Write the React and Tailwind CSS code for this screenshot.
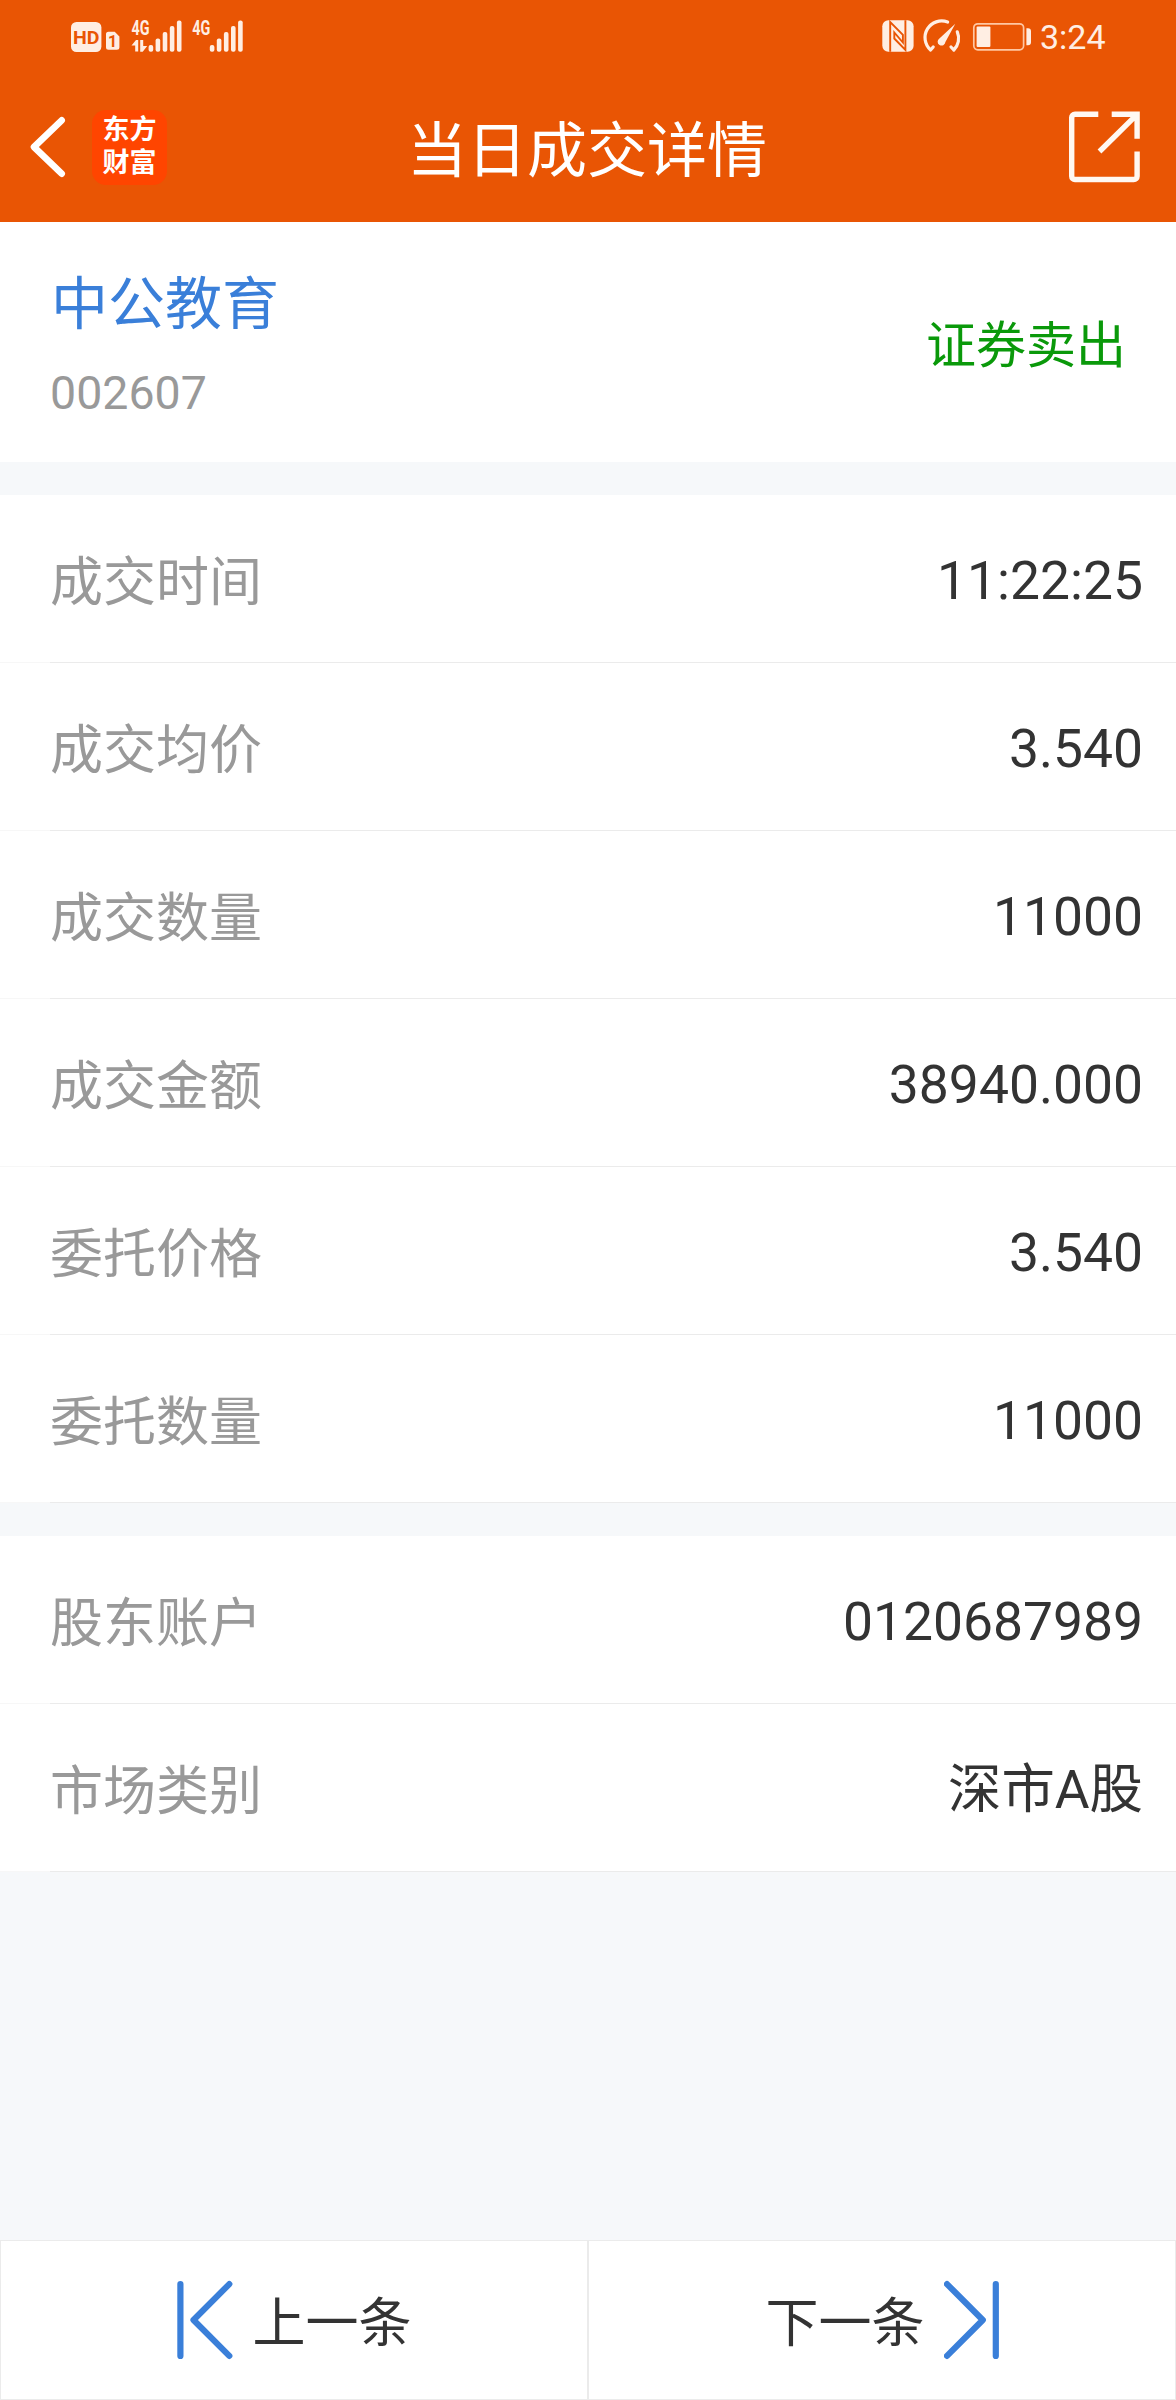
import React from 'react';

const dealRows = [
  { label: '成交时间', value: '11:22:25' },
  { label: '成交均价', value: '3.540' },
  { label: '成交数量', value: '11000' },
  { label: '成交金额', value: '38940.000' },
  { label: '委托价格', value: '3.540' },
  { label: '委托数量', value: '11000' },
];

const accountRows = [
  { label: '股东账户', value: '0120687989' },
  { label: '市场类别', value: '深市A股' },
];

const SignalBars = ({ x }) => (
  <g>
    <rect x={x} y="45" width="4.6" height="6.8" rx="2" />
    <rect x={x + 7} y="38.6" width="4.6" height="13.2" rx="2" />
    <rect x={x + 14.1} y="32" width="4.6" height="19.8" rx="2" />
    <rect x={x + 21.2} y="26" width="4.6" height="25.8" rx="2" />
    <rect x={x + 28.3} y="20.4" width="4.6" height="31.4" rx="2" />
  </g>
);

const StatusLeft = () => (
  <svg width="180" height="72" viewBox="70 0 180 72" fill="#ffeee3" fontFamily="Roboto, sans-serif">
    <rect x="71" y="22" width="30.4" height="30" rx="5.5" />
    <text x="73" y="44" fontSize="19" fontWeight="700" fill="#e95504" textLength="26.5" lengthAdjust="spacingAndGlyphs">HD</text>
    <path d="M108.5 31.7h6.2l4.7 4.8v10.8a2.5 2.5 0 0 1-2.5 2.5h-8.4a2.5 2.5 0 0 1-2.5-2.5v-13a2.5 2.5 0 0 1 2.5-2.6z" />
    <text x="108" y="47" fontSize="16" fontWeight="700" fill="#e95504">1</text>
    <text x="131.5" y="34.6" fontSize="19.5" fontWeight="700" textLength="18" lengthAdjust="spacingAndGlyphs">4G</text>
    <path d="M131.5 45.5l4.5-5.5h2.2v11.5h-3v-6zM140.2 40h3v6l4 0-4.5 5.7h-2.5z" />
    <SignalBars x={148.6} />
    <text x="192.3" y="34.6" fontSize="19.5" fontWeight="700" textLength="18" lengthAdjust="spacingAndGlyphs">4G</text>
    <SignalBars x={209.8} />
  </svg>
);

const StatusRight = () => (
  <svg width="153" height="72" viewBox="880 0 153 72" fill="#ffeee3">
    {/* nfc */}
    <rect x="882.3" y="20.3" width="31.3" height="31.4" rx="6" />
    <g fill="none" stroke="#e95504" strokeWidth="1.9">
      <path d="M890.2 51.7V22L902.9 34.8V42.5L894.3 32.5V38.5L905.4 50V20.3" />
    </g>
    {/* speed gauge */}
    <g fill="none" stroke="#ffeee3" strokeLinecap="round" strokeLinejoin="round" strokeWidth="3.2">
      <path d="M947.6 22.1A16.6 16.6 0 0 0 930.6 50L933.2 47" />
      <path d="M957.3 31.8A16.6 16.6 0 0 1 953.8 50L951 47" />
    </g>
    <path d="M955.3 23.8L945.4 42A3.9 3.9 0 1 1 939.4 38.4z" />
    {/* battery */}
    <rect x="973.8" y="23.8" width="49.8" height="26" rx="4" fill="none" stroke="#ffc7a3" strokeWidth="1.7" />
    <rect x="976.6" y="26.4" width="13.8" height="20.6" rx="1" />
    <path d="M1026.4 28.2h1.6a3 3 0 0 1 3 3v11a3 3 0 0 1-3 3h-1.6z" />
  </svg>
);

const BackIcon = () => (
  <svg width="38" height="64" viewBox="29 115 38 64" fill="none" stroke="#fff" strokeWidth="6.6" strokeLinecap="round" strokeLinejoin="round">
    <path d="M61.7 120.3L34 147L61.7 173.7" />
  </svg>
);

const ShareIcon = () => (
  <svg width="72" height="72" viewBox="1069 110.5 72 72" fill="none" stroke="#fff8f2" strokeWidth="5.4">
    <path d="M1098.3 113.8H1075a3.3 3.3 0 0 0-3.3 3.3V175.7a3.3 3.3 0 0 0 3.3 3.3H1133.8a3.3 3.3 0 0 0 3.3-3.3V151" />
    <path d="M1111.7 113.8H1137.1V138.3M1137.1 113.8L1099.5 151" />
  </svg>
);

const PrevIcon = () => (
  <svg width="56" height="80" viewBox="0 0 56 80" fill="none" stroke="#3a7fd9" strokeWidth="6.2" strokeLinecap="round" strokeLinejoin="round">
    <path d="M3.4 4.1V75.9M52.3 4.1L16.5 40L52.3 75.9" />
  </svg>
);

const NextIcon = () => (
  <svg width="56" height="80" viewBox="0 0 56 80" fill="none" stroke="#3a7fd9" strokeWidth="6.2" strokeLinecap="round" strokeLinejoin="round">
    <path d="M51.8 4.1V75.9M3 4.1L38.8 40L3 75.9" />
  </svg>
);

const DetailRow = ({ label, value }) => (
  <div className="flex h-[168px] flex-col bg-white">
    <div className="flex flex-1 items-center justify-between pt-[5px] pr-[33px] pl-[50px] leading-[80px]">
      <span className="pt-[4px] text-[53px] text-[#999999]">{label}</span>
      <span className="text-[53.4px] text-[#333333]">{value}</span>
    </div>
    <div className="flex h-px">
      <div className="w-[50px] bg-[#f7f7f7]" />
      <div className="flex-1 bg-[#ebebeb]" />
    </div>
  </div>
);

const App = () => {
  return (
    <div className="flex h-[2400px] w-[1176px] flex-col overflow-hidden bg-[#f6f8fa] font-['Roboto','Noto_Sans_CJK_SC',sans-serif]">
      <header className="h-[222px] bg-[#e95504] text-white">
        <div className="flex h-[72px] justify-between pr-[71px] pl-[70px]">
          <StatusLeft />
          <div className="flex items-center gap-[7px]">
            <StatusRight />
            <span className="w-[65px] pt-[2px] text-[34px] leading-[40px] text-[#ffeee3]">3:24</span>
          </div>
        </div>
        <div className="grid h-[150px] grid-cols-[1fr_auto_1fr] items-center pr-[35px] pl-[29px]">
          <div className="flex items-center gap-[25px]">
            <BackIcon />
            <div className="flex h-[75px] w-[75px] flex-col items-center justify-center rounded-[14px] bg-[#ff4500] text-[27px] leading-[33px] font-bold">
              <span>东方</span>
              <span>财富</span>
            </div>
          </div>
          <h1 className="pt-[10px] pl-[4px] text-[60px] leading-[80px]">当日成交详情</h1>
          <div className="flex justify-end">
            <ShareIcon />
          </div>
        </div>
      </header>

      <section className="flex h-[240px] items-center justify-between bg-white pr-[50px] pl-[50px]">
        <div className="pt-[18px]">
          <div className="pl-px text-[57px] leading-[84px] text-[#3a7fd9]">中公教育</div>
          <div className="text-[46.5px] leading-[92px] text-[#999999]">002607</div>
        </div>
        <div className="pt-[7px] text-[50px] leading-[70px] text-[#0a990a]">证券卖出</div>
      </section>

      <section className="mt-[33px]">
        {dealRows.map((row) => (
          <DetailRow key={row.label} label={row.label} value={row.value} />
        ))}
      </section>

      <section className="mt-[33px]">
        {accountRows.map((row) => (
          <DetailRow key={row.label} label={row.label} value={row.value} />
        ))}
      </section>

      <footer className="mt-auto grid h-[160px] grid-cols-2 text-[53px] leading-[80px] text-[#333333]">
        <button className="flex items-center justify-center gap-[20px] border border-[#ebebeb] bg-white">
          <PrevIcon />
          <span className="pt-[7px]">上一条</span>
        </button>
        <button className="flex items-center justify-center gap-[19px] border border-[#ebebeb] bg-white">
          <span className="pt-[7px] pl-px">下一条</span>
          <NextIcon />
        </button>
      </footer>
    </div>
  );
};

export default App;
